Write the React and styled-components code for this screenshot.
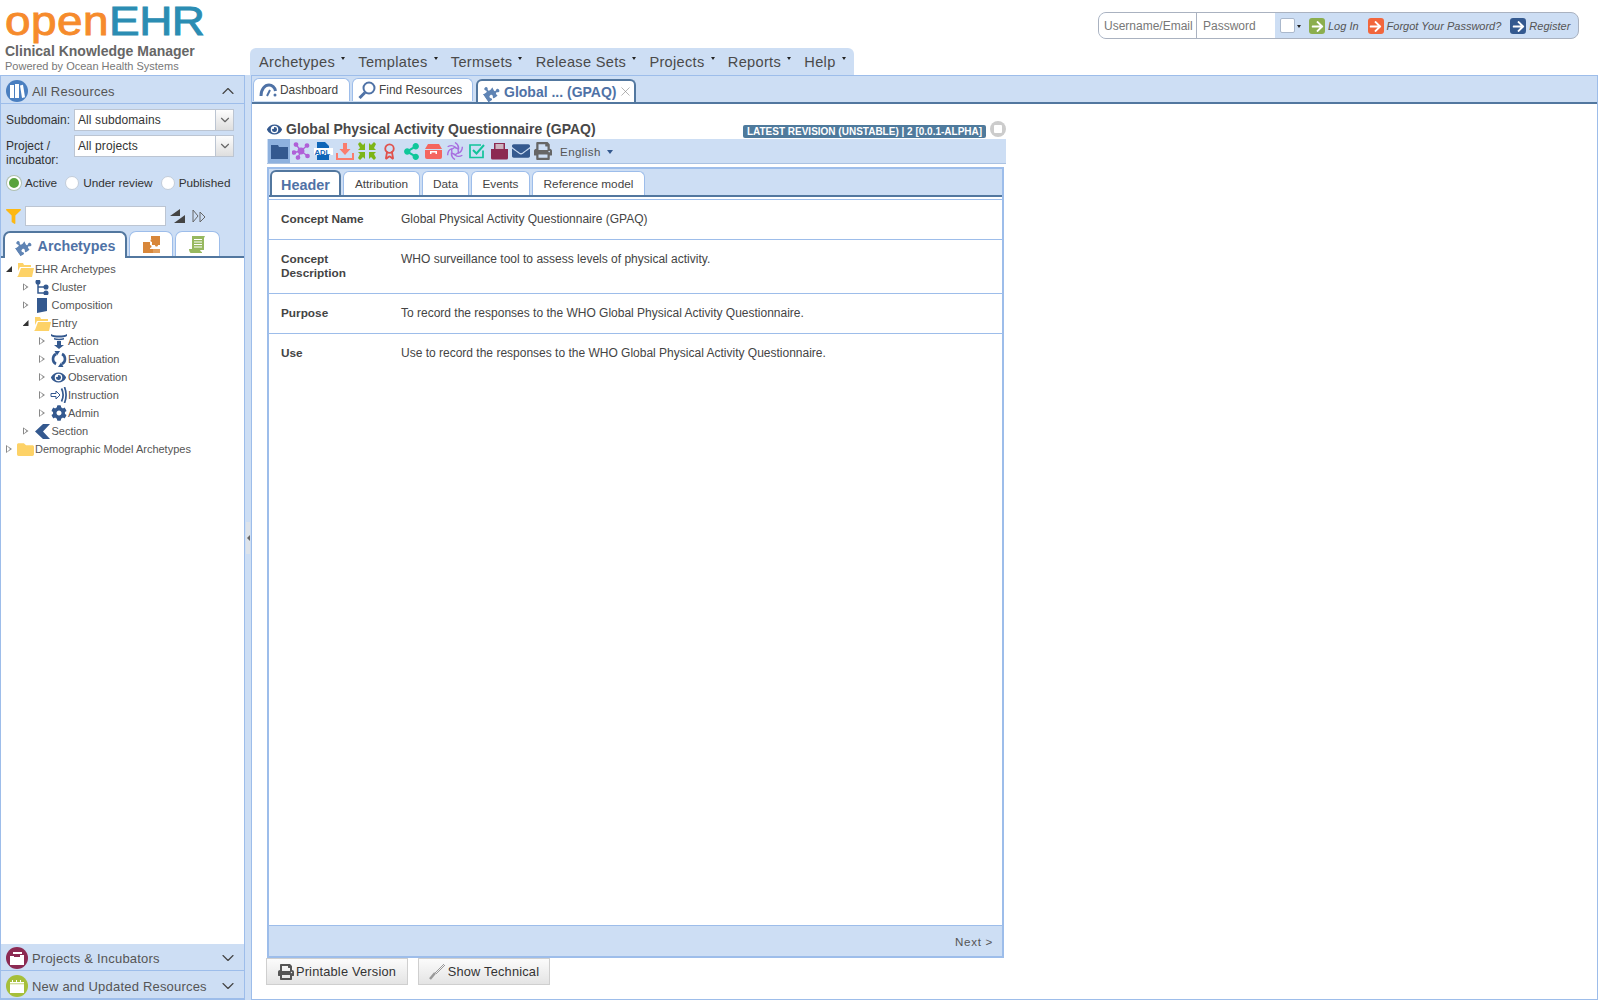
import React from "react"
import styled, { createGlobalStyle } from "styled-components"
import { ChevronUp, ChevronDown, X, Award } from "lucide-react"
import { FaPuzzlePiece, FaFolder, FaEye, FaCog, FaPrint, FaEnvelope, FaShareAlt, FaFilter, FaArrowRight } from "react-icons/fa"

const light = "#cddef4"
const line = "#9dbdea"
const dark = "#52779f"
const blue = "#34598f"
const tabBlue = "#4f72a6"

const Global = createGlobalStyle`
  html, body { margin: 0; padding: 0; height: 100%; background: #fff; }
  body { font-family: "Liberation Sans", Arial, sans-serif; color: #444; overflow: hidden; }
  * { box-sizing: border-box; }
`

const Page = styled.div`
  height: 1000px;
  display: flex;
  flex-direction: column;
`
const Header = styled.header`
  height: 75px;
  display: flex;
  flex-shrink: 0;
`
const Brand = styled.div`
  width: 250px;
  padding: 0 0 0 5px;
`
const Logo = styled.div`
  font-size: 41px;
  line-height: 43px;
  height: 43px;
  letter-spacing: 0.4px;
  -webkit-text-stroke: 0.9px currentColor;
  white-space: nowrap;
  color: #f68b2c;
  transform: scaleX(1.12);
  transform-origin: left center;
  span {
    color: #2b8db3;
    letter-spacing: -0.4px;
  }
`
const Product = styled.div`
  font-size: 14px;
  font-weight: bold;
  color: #666;
  line-height: 16px;
  white-space: nowrap;
`
const Powered = styled.div`
  font-size: 11px;
  color: #777;
  line-height: 14px;
`
const MenuBar = styled.nav`
  align-self: flex-end;
  height: 27px;
  display: flex;
  align-items: center;
  padding: 0 8px 0 9px;
  gap: 13.3px;
  background: ${light};
  border-radius: 6px 6px 0 0;
`
const MenuItem = styled.span`
  font-size: 14.6px;
  letter-spacing: 0.3px;
  color: #4a4a4a;
  display: flex;
  align-items: center;
  gap: 6px;
  white-space: nowrap;
  &::after {
    content: "";
    border: 2.5px solid transparent;
    border-top: 3.5px solid #222;
    margin-bottom: 5px;
  }
`
const Login = styled.div`
  margin: 12px 21px 0 auto;
  height: 27px;
  width: 481px;
  display: flex;
  align-items: center;
  border: 1px solid #aab2c0;
  border-radius: 8px;
  background: ${light};
  overflow: hidden;
`
const LoginField = styled.div`
  width: ${props => props.$width}px;
  height: 100%;
  background: #fff;
  border-right: ${props => (props.$divided ? "1px solid #aab2c0" : "none")};
  display: flex;
  align-items: center;
  padding-left: ${props => props.$pad}px;
  color: #777;
  font-size: 12px;
  flex-shrink: 0;
`
const LoginCheck = styled.span`
  width: 15px;
  height: 15px;
  margin-left: 5px;
  background: #fff;
  border: 1px solid #aab8cc;
  border-radius: 2px;
  flex-shrink: 0;
`
const Caret = styled.span`
  margin: 3px 8px 0 2px;
  border: 2.5px solid transparent;
  border-top: 3.5px solid #222;
  flex-shrink: 0;
`
const LoginLink = styled.span`
  display: flex;
  align-items: center;
  gap: 3px;
  font-style: italic;
  color: #555;
  font-size: 11px;
  margin-right: 9px;
  padding-top: 1px;
  white-space: nowrap;
`
const ArrowBox = styled.span`
  width: 16px;
  height: 16px;
  border-radius: 3px;
  background: ${props => props.$color};
  color: #fff;
  display: flex;
  align-items: center;
  justify-content: center;
  font-size: 13px;
`

const Body = styled.div`
  flex: 1;
  display: flex;
  min-height: 0;
`
const Sidebar = styled.aside`
  width: 245px;
  flex-shrink: 0;
  display: flex;
  flex-direction: column;
  border: 1px solid ${line};
  background: #fff;
`
const PaneHead = styled.div`
  height: ${props => props.$height}px;
  flex-shrink: 0;
  display: flex;
  align-items: center;
  padding: ${props => props.$height - 25}px 6px 0 5px;
  gap: 4px;
  background: ${light};
  border-bottom: 1px solid ${line};
  font-size: 13px;
  letter-spacing: 0.2px;
  color: #555;
  svg.chev {
    margin-left: auto;
    color: #444;
  }
`
const Round = styled.span`
  width: 22px;
  height: 22px;
  border-radius: 50%;
  background: ${props => props.$color};
  display: flex;
  align-items: center;
  justify-content: center;
  flex-shrink: 0;
`
const FilterArea = styled.div`
  background: ${light};
  padding: 5px 0 0 5px;
  height: 154px;
  flex-shrink: 0;
  border-bottom: 2px solid ${dark};
  display: flex;
  flex-direction: column;
  position: relative;
`
const FieldRow = styled.div`
  display: grid;
  grid-template-columns: 68px 160px;
  height: 26px;
  font-size: 12px;
  line-height: 14px;
  color: #333;
  label {
    padding-top: 4px;
  }
`
const Select = styled.div`
  height: 22px;
  background: #fff;
  border: 1px solid #bcc5d2;
  display: flex;
  align-items: center;
  padding-left: 3px;
  font-size: 12px;
  color: #333;
  letter-spacing: 0.1px;
`
const SelectArrow = styled.span`
  margin-left: auto;
  width: 18px;
  height: 100%;
  border-left: 1px solid #bcc5d2;
  background: linear-gradient(#fdfdfd, #dedede);
  display: flex;
  align-items: center;
  justify-content: center;
  color: #666;
`
const RadioRow = styled.div`
  display: flex;
  align-items: center;
  margin-top: 15px;
  font-size: 11.8px;
  color: #333;
  gap: 4px;
`
const Radio = styled.span`
  width: 14px;
  height: 14px;
  border-radius: 50%;
  background: ${props => (props.$on ? "#5aa33c" : "#fff")};
  border: ${props => (props.$on ? "2px solid #fff" : "1px solid #c3cdd9")};
  box-shadow: ${props => (props.$on ? "0 0 0 1px #b0c0b0" : "none")};
  margin-left: ${props => (props.$first ? 1 : 4)}px;
`
const SearchRow = styled.div`
  display: flex;
  align-items: center;
  margin-top: 16px;
  height: 20px;
  color: #fdb813;
`
const SearchInput = styled.div`
  width: 141px;
  height: 20px;
  margin: 0 4px 0 4px;
  background: #fff;
  border: 1px solid #bcc5d2;
`
const Spacer = styled.span`
  width: 7px;
`
const TabsLeft = styled.div`
  position: absolute;
  left: 2px;
  bottom: -2px;
  display: flex;
  gap: 2px;
  align-items: flex-end;
`
const SideTab = styled.div`
  width: ${props => props.$width}px;
  height: ${props => (props.$active ? 27 : 25)}px;
  margin-bottom: ${props => (props.$active ? 0 : 2)}px;
  background: #fff;
  border: ${props => (props.$active ? `2px solid ${dark}` : `1px solid ${line}`)};
  border-bottom: none;
  border-radius: 7px 7px 0 0;
  display: flex;
  align-items: center;
  justify-content: center;
  gap: 7px;
  font-size: 14.3px;
  font-weight: bold;
  color: ${tabBlue};
`
const Tilted = styled.span`
  display: flex;
  color: ${props => props.$color};
  transform: rotate(-35deg);
`
const Tree = styled.div`
  flex: 1;
  padding-top: 2px;
  min-height: 0;
`
const TreeRow = styled.div`
  height: 18px;
  display: flex;
  align-items: center;
  padding-left: ${props => 5 + props.$depth * 16.5}px;
  font-size: 11px;
  color: #555;
  white-space: nowrap;
`
const Toggle = styled.span`
  width: 6px;
  height: ${props => (props.$open ? 6 : 8)}px;
  margin-right: 5px;
  flex-shrink: 0;
  position: relative;
  background: ${props => (props.$open ? "#333" : "#888")};
  clip-path: ${props =>
    props.$open ? "polygon(100% 0, 100% 100%, 0 100%)" : "polygon(0 0, 100% 50%, 0 100%)"};
  &::after {
    content: "";
    display: ${props => (props.$open ? "none" : "block")};
    position: absolute;
    inset: 1px 2px 1px 1px;
    clip-path: polygon(0 0, 100% 50%, 0 100%);
    background: #fff;
  }
`
const NodeIcon = styled.span`
  width: 17px;
  height: 16px;
  margin-right: 1px;
  display: flex;
  align-items: center;
  justify-content: center;
  color: ${props => props.$color || blue};
  font-size: 15px;
  flex-shrink: 0;
`

const Splitter = styled.div`
  width: 6px;
  flex-shrink: 0;
  background: ${light};
  display: flex;
  align-items: center;
  justify-content: center;
`
const Handle = styled.span`
  width: 4px;
  height: 32px;
  background: #dde3ea;
  display: flex;
  align-items: center;
  &::after {
    content: "";
    border: 3px solid transparent;
    border-right: 3px solid #666;
    margin-left: -2px;
  }
`
const Main = styled.main`
  flex: 1;
  margin-right: 2px;
  border: 1px solid ${line};
  display: flex;
  flex-direction: column;
  min-width: 0;
`
const MainTabs = styled.div`
  height: 28px;
  flex-shrink: 0;
  background: ${light};
  border-bottom: 2px solid ${dark};
  display: flex;
  align-items: flex-end;
  padding-left: 1px;
  gap: 2px;
`
const MainTab = styled.div`
  height: 23px;
  width: ${props => props.$width}px;
  margin-bottom: ${props => (props.$active ? 0 : 1)}px;
  margin-left: ${props => (props.$active ? 1 : 0)}px;
  background: #fff;
  border: ${props => (props.$active ? `2px solid ${dark}` : `1px solid ${line}`)};
  border-bottom: none;
  border-radius: 6px 6px 0 0;
  display: flex;
  align-items: center;
  padding-left: 5px;
  gap: ${props => (props.$active ? 5 : 3)}px;
  font-size: ${props => (props.$active ? 14 : 11.9)}px;
  font-weight: ${props => (props.$active ? "bold" : "normal")};
  color: ${props => (props.$active ? tabBlue : "#444")};
  white-space: nowrap;
`
const CloseIcon = styled(X)`
  color: #888;
  flex-shrink: 0;
  margin-left: -4px;
`
const Doc = styled.div`
  width: 739px;
  margin: 15px 0 0 15px;
  display: flex;
  flex-direction: column;
`
const TitleRow = styled.div`
  height: 20px;
  display: flex;
  align-items: center;
  gap: 4px;
  color: ${blue};
`
const Title = styled.h1`
  margin: 0;
  font-size: 14px;
  font-weight: bold;
  color: #484848;
`
const Badge = styled.span`
  margin: 5px 4px 0 auto;
  height: 13px;
  width: 243px;
  background: #4f7a9c;
  border-radius: 2px;
  color: #fff;
  font-size: 10px;
  font-weight: bold;
  line-height: 13px;
  text-align: center;
  white-space: nowrap;
`
const StopDot = styled.span`
  width: 16px;
  height: 16px;
  margin: 0 0 1px -4px;
  border-radius: 50%;
  background: #ccc;
  display: flex;
  align-items: center;
  justify-content: center;
  &::after {
    content: "";
    width: 8px;
    height: 8px;
    background: #fff;
    border-radius: 1px;
  }
`
const Toolbar = styled.div`
  height: 25px;
  background: ${light};
  border-bottom: 1px solid #aac2e2;
  display: flex;
  align-items: center;
  padding-left: 1px;
`
const Tool = styled.span`
  width: 22px;
  height: 24px;
  display: flex;
  align-items: center;
  justify-content: center;
  background: ${props => (props.$active ? "#8eb1de" : "transparent")};
  color: ${props => props.$color};
  font-size: 17px;
  flex-shrink: 0;
`
const Lang = styled.span`
  margin-left: 6px;
  font-size: 11.6px;
  letter-spacing: 0.4px;
  color: #555;
  display: flex;
  align-items: center;
  gap: 6px;
  &::after {
    content: "";
    border: 3px solid transparent;
    border-top: 4px solid ${blue};
    margin-top: 4px;
  }
`
const Panel = styled.section`
  margin-top: 3px;
  width: 737px;
  height: 791px;
  border: 2px solid ${line};
  display: flex;
  flex-direction: column;
`
const PanelTabs = styled.div`
  height: 28px;
  flex-shrink: 0;
  background: ${light};
  border-bottom: 2px solid ${dark};
  display: flex;
  align-items: flex-end;
  padding-left: 1px;
  gap: 2px;
`
const PanelTab = styled.div`
  height: ${props => (props.$active ? 25 : 24)}px;
  width: ${props => props.$width}px;
  padding-top: ${props => (props.$active ? 2 : 0)}px;
  background: #fff;
  border: ${props => (props.$active ? `2px solid ${dark}` : `1px solid ${line}`)};
  border-bottom: none;
  border-radius: 6px 6px 0 0;
  display: flex;
  align-items: center;
  justify-content: center;
  font-size: ${props => (props.$active ? 14.4 : 11.8)}px;
  font-weight: ${props => (props.$active ? "bold" : "normal")};
  color: ${props => (props.$active ? tabBlue : "#444")};
`
const Rows = styled.div`
  flex: 1;
  padding-top: 2px;
`
const Row = styled.div`
  display: grid;
  grid-template-columns: 120px 1fr;
  height: ${props => props.$height}px;
  padding: 12px 0 0 12px;
  border-top: 1px solid ${line};
  border-left: 2px solid ${line};
  margin-left: -2px;
  font-size: 12px;
  line-height: 14px;
  color: #444;
  b {
    font-size: 11.8px;
    font-weight: bold;
  }
`
const PanelFoot = styled.div`
  height: 31px;
  flex-shrink: 0;
  background: ${light};
  border-top: 1px solid ${line};
  display: flex;
  align-items: center;
  justify-content: flex-end;
  padding-right: 9px;
  font-size: 11.6px;
  letter-spacing: 0.7px;
  color: #555;
`
const Actions = styled.div`
  display: flex;
  gap: 10px;
  margin: 0 0 0 -1px;
`
const ActionButton = styled.button`
  height: 27px;
  width: ${props => props.$width}px;
  padding: 0;
  display: flex;
  align-items: center;
  justify-content: center;
  gap: 2px;
  background: linear-gradient(#fbfbfb, #e4e4e4);
  border: 1px solid #cfcfcf;
  font-family: inherit;
  font-size: 12.8px;
  letter-spacing: 0.2px;
  color: #333;
  svg {
    color: #555;
  }
`

// hand drawn icons, the packages have nothing close to these
const Books = () => (
  <svg width="15" height="14" viewBox="0 0 15 14" fill="#fff">
    <path d="M0 1h4v13H0zM5 0h4v14H5zM10 1.500l3-.8 2 12.500-3 .8z" />
  </svg>
)
const FolderFlat = ({ color }) => (
  <svg width="17" height="15" viewBox="0 0 17 15">
    <path fill={color} d="M0 1h7l1 2h9v12H0z" />
    <path fill="#8eb1de" d="M9 2h7v1H9z" />
  </svg>
)
const FolderOpen = () => (
  <svg width="17" height="15" viewBox="0 0 17 15" fill="#fdd267">
    <path d="M1 1h5l1 2h7v2H3L1 9z" />
    <path d="M4 6h13l-2 9H0l1-1z" />
  </svg>
)
const Network = () => (
  <svg width="18" height="18" viewBox="0 0 18 18" fill="#b060d8" stroke="#b060d8" strokeWidth="1.300">
    <path d="M9 9 4 2.500M9 9l6-5.500M9 9l-7 1.500M9 9l6.500 5M9 9l-3 6.500" />
    <circle cx="9" cy="9" r="2.800" />
    <circle cx="4" cy="2.500" r="1.700" />
    <circle cx="15" cy="3.500" r="1.700" />
    <circle cx="2" cy="10.500" r="1.700" />
    <circle cx="15.500" cy="14" r="1.700" />
    <circle cx="6" cy="15.500" r="1.700" />
  </svg>
)
const AdlDoc = () => (
  <svg width="19" height="18" viewBox="0 0 19 18">
    <path fill="#0f66b8" d="M3 0h8l4 4v14H3z" />
    <rect x="0" y="6" width="19" height="7" fill="#fff" />
    <text x="0.500" y="12.600" fontSize="7.600" fontWeight="bold" fontFamily="Liberation Sans" fill="#0f66b8">ADL</text>
  </svg>
)
const Tray = () => (
  <svg width="18" height="17" viewBox="0 0 18 17" fill="#fa7d6e">
    <path d="M7 0h4v6h3.500L9 12 3.500 6H7z" />
    <path d="M0 10h2v5h14v-5h2v7H0z" />
  </svg>
)
const Compress = () => (
  <svg width="18" height="18" viewBox="0 0 18 18" fill="#7cb518">
    <path d="M0 2 2 0l3 3 2-2v7H0l2-2zM18 2l-2-2-3 3-2-2v7h7l-2-2zM0 16l2 2 3-3 2 2v-7H0l2 2zM18 16l-2 2-3-3-2 2v-7h7l-2 2z" />
  </svg>
)
const Toolbox = () => (
  <svg width="17" height="15" viewBox="0 0 17 15" fill="#f4665f">
    <path d="M3 0h11l3 5H0z" />
    <path d="M0 6h17v7a2 2 0 0 1-2 2H2a2 2 0 0 1-2-2z" />
    <path fill="#fff" d="M5 7h7v3h-1.500V8.500h-4V10H5z" />
  </svg>
)
const Swirl = () => (
  <svg width="18" height="18" viewBox="0 0 18 18" fill="none" stroke="#a86ee0" strokeWidth="1.400">
    {[0, 60, 120, 180, 240, 300].map(angle => (
      <path key={angle} d="M9 0.500c2.500 1.500 4 3.500 3.500 6.500L9 5.500" transform={`rotate(${angle} 9 9)`} />
    ))}
  </svg>
)
const CheckBoxIcon = () => (
  <svg width="16" height="16" viewBox="0 0 16 16" fill="none" stroke="#12c49a" strokeWidth="1.700">
    <path d="M14 7.500V14.500H1V2h11" />
    <path d="m4 7 3.500 3.500L15 2" strokeWidth="2" />
  </svg>
)
const Portfolio = () => (
  <svg width="17" height="17" viewBox="0 0 17 17">
    <path fill="#8c2a52" d="M3 0h11v8H3z" />
    <path fill="#cdb4c0" d="M4.500 1h8v5h-8z" />
    <path fill="#8c2a52" d="M0 6h4.500v2h8V6H17v9a1.500 1.500 0 0 1-1.500 1.500h-14A1.500 1.500 0 0 1 0 15z" />
  </svg>
)
const RoundFolder = () => (
  <svg width="14" height="13" viewBox="0 0 14 13" fill="#fff">
    <path d="M3 0h9v2H3z" />
    <path d="M0 4h4v1h6V3h4v10H0z" />
  </svg>
)
const CalendarBox = () => (
  <svg width="14" height="13" viewBox="0 0 14 13" fill="#fff">
    <path d="M0 2h14v11H0z" />
    <path d="M2 0h1v2H2zM6 0h1v2H6zM10 0h1v2h-1z" />
    <path d="M0 3.500h14v.7H0z" fill="#a6bf3a" />
  </svg>
)
const Gauge = () => (
  <svg width="18" height="14" viewBox="0 0 18 14" fill="none" stroke={tabBlue} strokeWidth="3">
    <path d="M2 13C2 6 6 2 10 2c3 0 6 2.500 6.500 6" />
    <path d="M8 13l3-6" strokeWidth="2" />
    <circle cx="16" cy="12" r="1.500" fill={tabBlue} stroke="none" />
  </svg>
)
const Magnifier = () => (
  <svg width="18" height="18" viewBox="0 0 18 18" fill="none" stroke={tabBlue}>
    <circle cx="11" cy="7" r="5.500" strokeWidth="2" />
    <path d="M7 11.500 1.500 17" strokeWidth="3" />
  </svg>
)
const Chunks = () => (
  <svg width="17" height="17" viewBox="0 0 17 17">
    <path fill="#d8873a" d="M8 0h9v9h-2c0 2-3 2-3 0H9V6c-2 0-2-3 0-3H8zM0 6h7v3c2 0 2 3 0 3v1h3v4H0z" />
    <path d="M10 13h7v4h-7z" fill="#e2a05f" />
  </svg>
)
const Scroll = () => (
  <svg width="17" height="17" viewBox="0 0 17 17" fill="#97b85f">
    <path d="M3 0h13l-1 2v12H3z" />
    <path d="M0 13h11c0 2 1 3 2 3v1H2c-1 0-2-2-2-4z" />
    <path d="M5 3.500h8M5 6h8M5 8.500h8M5 11h8" stroke="#fff" />
  </svg>
)
const ClusterIcon = () => (
  <svg width="14" height="15" viewBox="0 0 14 15" fill={blue} stroke={blue} strokeWidth="1.500">
    <path d="M3 2v11h8M3 7h8" fill="none" />
    <circle cx="3" cy="2" r="1.800" />
    <circle cx="11" cy="7" r="1.800" />
    <circle cx="11" cy="13" r="1.800" />
  </svg>
)
const CompositionIcon = () => (
  <svg width="12" height="15" viewBox="0 0 12 15" fill={blue}>
    <path d="M1 0h10v13L1 15z" />
  </svg>
)
const ActionIcon = () => (
  <svg width="16" height="15" viewBox="0 0 16 15" fill={blue}>
    <path d="M0 0c3 2 13 2 16 0v2c-3 2-13 2-16 0z" />
    <path d="M3 4c3 1 7 1 10 0v1.500c-3 1-7 1-10 0z" />
    <path d="M6 7h4v4h3l-5 4-5-4h3z" />
  </svg>
)
const EvaluationIcon = () => (
  <svg width="16" height="16" viewBox="0 0 16 16" fill="none" stroke={blue} strokeWidth="2.600">
    <path d="M5 3C1 5 1 11 5 13M11 3c4 2 4 8 0 10" />
    <path fill={blue} stroke="none" d="M3.500 0H9L6 4.500zM12.500 16H7l3-4.500z" />
  </svg>
)
const InstructionIcon = () => (
  <svg width="17" height="16" viewBox="0 0 17 16" fill="none" stroke={blue}>
    <path d="M1 6.500h5V4l4 4-4 4V9.500H1z" />
    <path d="M11.500 1.500c2 4 2 9 0 13M14.500 0c2 5 2 11 0 16" strokeWidth="1.700" />
  </svg>
)
const SectionIcon = () => (
  <svg width="15" height="15" viewBox="0 0 15 15" fill={blue}>
    <path d="M8 0h7l-7 7.500 7 7.500H8L0 7.500z" />
  </svg>
)
const Stack = () => (
  <svg width="15" height="14" viewBox="0 0 15 14" fill="#444">
    <path d="M10 0v7H0zM15 6v8H4z" />
  </svg>
)
const Jump = () => (
  <svg width="14" height="14" viewBox="0 0 14 14" fill="none" stroke="#666">
    <path d="M1 1l5 6-5 6zM8 3l5 5-5 5z" />
  </svg>
)
const Screwdriver = () => (
  <svg width="17" height="17" viewBox="0 0 17 17" fill="none" stroke="#999">
    <path d="M1 16l5-6" strokeWidth="2.500" />
    <path d="M6 10l9-9" strokeWidth="1" />
    <path d="M7 11l9-9" strokeWidth="1" />
  </svg>
)

const menu = ["Archetypes", "Templates", "Termsets", "Release Sets", "Projects", "Reports", "Help"]
const tree = [
  { depth: 0, open: true, label: "EHR Archetypes", icon: <FolderOpen /> },
  { depth: 1, label: "Cluster", icon: <ClusterIcon /> },
  { depth: 1, label: "Composition", icon: <CompositionIcon /> },
  { depth: 1, open: true, label: "Entry", icon: <FolderOpen /> },
  { depth: 2, label: "Action", icon: <ActionIcon /> },
  { depth: 2, label: "Evaluation", icon: <EvaluationIcon /> },
  { depth: 2, label: "Observation", icon: <FaEye /> },
  { depth: 2, label: "Instruction", icon: <InstructionIcon /> },
  { depth: 2, label: "Admin", icon: <FaCog size={16} /> },
  { depth: 1, label: "Section", icon: <SectionIcon /> },
  { depth: 0, label: "Demographic Model Archetypes", icon: <FaFolder size={17} />, color: "#fdd267" },
]
const tools = [
  { icon: <FolderFlat color={blue} />, active: true },
  { icon: <Network /> },
  { icon: <AdlDoc /> },
  { icon: <Tray /> },
  { icon: <Compress /> },
  { icon: <Award size={17} strokeWidth={2.6} />, color: "#e0524d" },
  { icon: <FaShareAlt />, color: "#10c79a" },
  { icon: <Toolbox /> },
  { icon: <Swirl /> },
  { icon: <CheckBoxIcon /> },
  { icon: <Portfolio /> },
  { icon: <FaEnvelope size={18} />, color: blue },
  { icon: <FaPrint size={18} />, color: "#666" },
]
const rows = [
  { name: "Concept Name", value: "Global Physical Activity Questionnaire (GPAQ)", height: 40 },
  { name: <>Concept<br />Description</>, value: "WHO surveillance tool to assess levels of physical activity.", height: 54 },
  { name: "Purpose", value: "To record the responses to the WHO Global Physical Activity Questionnaire.", height: 40 },
  { name: "Use", value: "Use to record the responses to the WHO Global Physical Activity Questionnaire.", height: 39 },
]

function App() {
  return (
    <Page>
      <Global />
      <Header>
        <Brand>
          <Logo>open<span>EHR</span></Logo>
          <Product>Clinical Knowledge Manager</Product>
          <Powered>Powered by Ocean Health Systems</Powered>
        </Brand>
        <MenuBar>
          {menu.map(item => <MenuItem key={item}>{item}</MenuItem>)}
        </MenuBar>
        <Login>
          <LoginField $width={98} $pad={5} $divided>Username/Email</LoginField>
          <LoginField $width={78} $pad={6}>Password</LoginField>
          <LoginCheck />
          <Caret />
          <LoginLink><ArrowBox $color="#8bae4e"><FaArrowRight /></ArrowBox>Log In</LoginLink>
          <LoginLink><ArrowBox $color="#f2663c"><FaArrowRight /></ArrowBox>Forgot Your Password?</LoginLink>
          <LoginLink><ArrowBox $color={blue}><FaArrowRight /></ArrowBox>Register</LoginLink>
        </Login>
      </Header>
      <Body>
        <Sidebar>
          <PaneHead $height={28}>
            <Round $color="#4a7fc0"><Books /></Round>
            All Resources
            <ChevronUp className="chev" size={20} strokeWidth={1.4} />
          </PaneHead>
          <FilterArea>
            <FieldRow>
              <label>Subdomain:</label>
              <Select>All subdomains<SelectArrow><ChevronDown size={14} /></SelectArrow></Select>
            </FieldRow>
            <FieldRow>
              <label>Project /<br />incubator:</label>
              <Select>All projects<SelectArrow><ChevronDown size={14} /></SelectArrow></Select>
            </FieldRow>
            <RadioRow>
              <Radio $on $first />Active
              <Radio />Under review
              <Radio />Published
            </RadioRow>
            <SearchRow>
              <FaFilter size={15} />
              <SearchInput />
              <Stack />
              <Spacer />
              <Jump />
            </SearchRow>
            <TabsLeft>
              <SideTab $active $width={124}><Tilted $color="#5f84b4"><FaPuzzlePiece size={16} /></Tilted>Archetypes</SideTab>
              <SideTab $width={44}><Chunks /></SideTab>
              <SideTab $width={45}><Scroll /></SideTab>
            </TabsLeft>
          </FilterArea>
          <Tree>
            {tree.map(node => (
              <TreeRow key={node.label} $depth={node.depth}>
                <Toggle $open={node.open} />
                <NodeIcon $color={node.color}>{node.icon}</NodeIcon>
                {node.label}
              </TreeRow>
            ))}
          </Tree>
          <PaneHead $height={27}>
            <Round $color="#8c2a52"><RoundFolder /></Round>
            Projects &amp; Incubators
            <ChevronDown className="chev" size={20} strokeWidth={1.4} />
          </PaneHead>
          <PaneHead $height={28}>
            <Round $color="#a6bf3a"><CalendarBox /></Round>
            New and Updated Resources
            <ChevronDown className="chev" size={20} strokeWidth={1.4} />
          </PaneHead>
        </Sidebar>
        <Splitter><Handle /></Splitter>
        <Main>
          <MainTabs>
            <MainTab $width={97}><Gauge />Dashboard</MainTab>
            <MainTab $width={121}><Magnifier />Find Resources</MainTab>
            <MainTab $active $width={160}>
              <Tilted $color="#5f84b4"><FaPuzzlePiece size={16} /></Tilted>Global ... (GPAQ)
              <CloseIcon size={15} strokeWidth={1} />
            </MainTab>
          </MainTabs>
          <Doc>
            <TitleRow>
              <FaEye size={15} />
              <Title>Global Physical Activity Questionnaire (GPAQ)</Title>
              <Badge>LATEST REVISION (UNSTABLE) | 2 [0.0.1-ALPHA]</Badge>
              <StopDot />
            </TitleRow>
            <Toolbar>
              {tools.map((tool, i) => (
                <Tool key={i} $active={tool.active} $color={tool.color}>{tool.icon}</Tool>
              ))}
              <Lang>English</Lang>
            </Toolbar>
            <Panel>
              <PanelTabs>
                <PanelTab $active $width={71}>Header</PanelTab>
                <PanelTab $width={77}>Attribution</PanelTab>
                <PanelTab $width={47}>Data</PanelTab>
                <PanelTab $width={59}>Events</PanelTab>
                <PanelTab $width={113}>Reference model</PanelTab>
              </PanelTabs>
              <Rows>
                {rows.map((row, i) => (
                  <Row key={i} $height={row.height}>
                    <b>{row.name}</b>
                    <span>{row.value}</span>
                  </Row>
                ))}
              </Rows>
              <PanelFoot>Next &gt;</PanelFoot>
            </Panel>
            <Actions>
              <ActionButton $width={142}><FaPrint size={16} />Printable Version</ActionButton>
              <ActionButton $width={132}><Screwdriver />Show Technical</ActionButton>
            </Actions>
          </Doc>
        </Main>
      </Body>
    </Page>
  )
}

export default App
